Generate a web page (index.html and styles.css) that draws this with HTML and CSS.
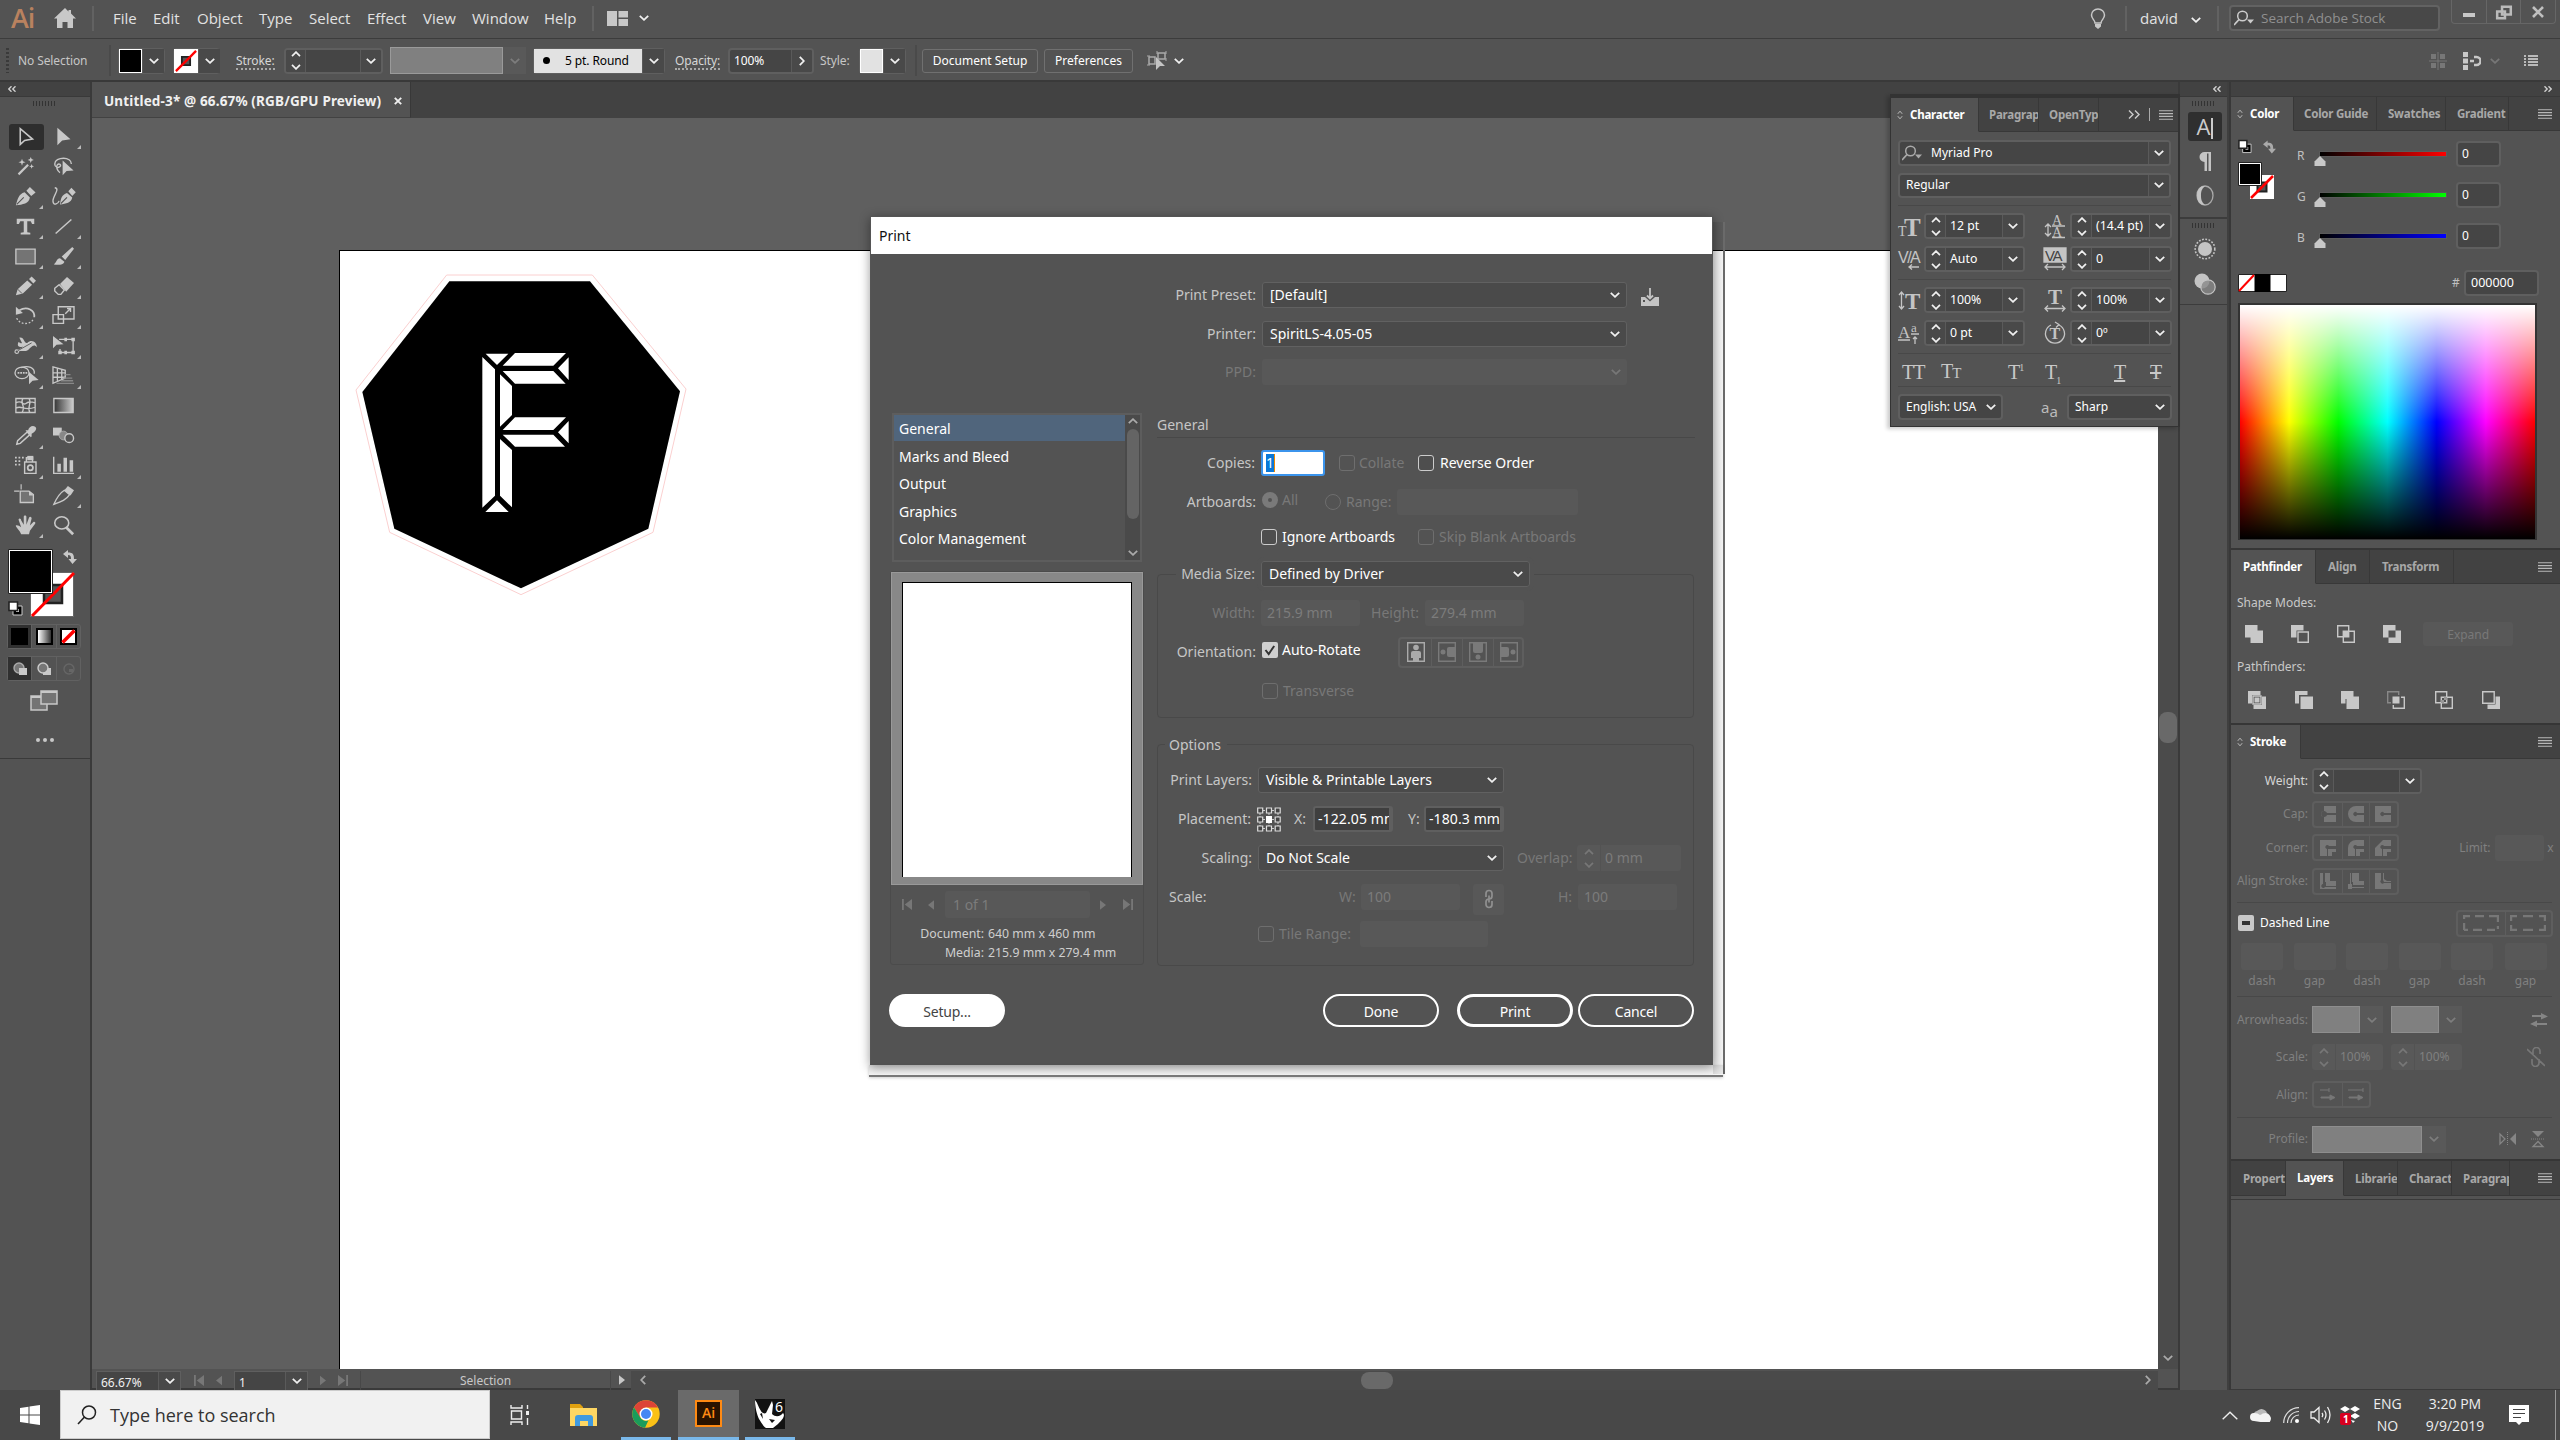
FILE: index.html
```html
<!DOCTYPE html>
<html lang="en">
<head>
<meta charset="utf-8">
<title>Untitled-3 - Print</title>
<link rel="stylesheet" href="styles.css">
</head>
<body>
<svg class="defs" aria-hidden="true">
  <linearGradient id="gr"><stop offset="0" stop-color="#333"/><stop offset="1" stop-color="#ccc"/></linearGradient>
  <symbol id="chev" viewBox="0 0 10 6"><path d="M.8.8 5 4.8 9.2.8" fill="none" stroke="currentColor" stroke-width="1.8"/></symbol>
  <symbol id="steps" viewBox="0 0 10 20"><path d="M.8 5.4 5 1.2l4.2 4.2M.8 14.6 5 18.8l4.2-4.2" fill="none" stroke="currentColor" stroke-width="1.8"/></symbol>
  <symbol id="menu" viewBox="0 0 14 10"><path d="M0 .8h14M0 3.6h14M0 6.4h14M0 9.2h14" stroke="currentColor" stroke-width="1.1"/></symbol>
  <symbol id="dbl" viewBox="0 0 8 6"><path d="M3.5.3.8 3l2.7 2.7M7.5.3 4.8 3l2.7 2.7" fill="none" stroke="currentColor" stroke-width="1.4"/></symbol>
  <symbol id="grip" viewBox="0 0 24 5"><path d="M.5 0v5M3.5 0v5M6.5 0v5M9.5 0v5M12.5 0v5M15.5 0v5M18.5 0v5M21.5 0v5" stroke="#333"/></symbol>
  <symbol id="sort" viewBox="0 0 6 10"><path d="M.8 3.8 3 1.2l2.200 2.600M.8 6.200 3 8.800l2.200-2.600" fill="none" stroke="currentColor"/></symbol>
  <symbol id="none" viewBox="0 0 24 24"><path fill="#fff" d="M0 0h24v24H0z"/><path d="M7.500 7.500h9v9h-9z" fill="#555" stroke="#222" stroke-width="2"/><path d="m1 23 22-22" stroke="#f00" stroke-width="2.500"/></symbol>
  <symbol id="swap" viewBox="0 0 14 14"><path d="M0 4 5 0v2.500c5 0 6 2 6 6.500h3l-4.500 5L5.500 9H8c0-3-.5-4-3-4v3z" fill="currentColor"/></symbol>
  <symbol id="deflt" viewBox="0 0 15 15"><path d="M5 5h9v9H5z" fill="#000" stroke="#ccc"/><path d="M8 8h3v3H8z" fill="#ccc"/><path d="M1 1h8.500v8.500H1z" fill="#fff" stroke="#222" stroke-width="1.600"/></symbol>
  <symbol id="find" viewBox="0 0 20 16"><circle cx="8.500" cy="6" r="4.800" fill="none" stroke="currentColor" stroke-width="1.500"/><path d="M5 9.500 0 15" stroke="currentColor" stroke-width="1.800"/><path d="M13 9.500h7l-3.500 4z" fill="currentColor"/></symbol>
  <symbol id="first" viewBox="0 0 11 12"><path d="M0 0h2v12H0zM11 0v12L3 6z" fill="currentColor"/></symbol>
  <symbol id="prev" viewBox="0 0 7 11"><path d="M7 0v11L0 5.500z" fill="currentColor"/></symbol>
  <symbol id="next" viewBox="0 0 7 11"><path d="M0 0v11l7-5.500z" fill="currentColor"/></symbol>
  <symbol id="last" viewBox="0 0 11 12"><path d="M9 0h2v12H9zM0 0v12l8-6z" fill="currentColor"/></symbol>
  <symbol id="chain" viewBox="0 0 10 20"><path d="M2 8V4.500a3 3 0 0 1 6 0V7a3 3 0 0 1-3 3M8 12v3.500a3 3 0 0 1-6 0V13a3 3 0 0 1 3-3M5 6.500v7" fill="none" stroke="currentColor" stroke-width="1.700"/></symbol>
</svg>

<div class="app">
<header class="menubar">
  <span class="ai">Ai</span>
  <svg width="22" height="20" viewBox="0 0 22 20"><path d="M11 0 0 10.500h3V20h5.500v-6h5v6H19v-9.500h3L17 5.500V2h-2.500v1.400z" fill="#c8c8c8"/></svg>
  <i class="vsep"></i>
  <span>File</span><span>Edit</span><span>Object</span><span>Type</span><span>Select</span><span>Effect</span><span>View</span><span>Window</span><span>Help</span>
  <i class="vsep"></i>
  <svg width="21" height="15" viewBox="0 0 21 15"><path d="M0 0h10v15H0zM11.500 0H21v6.500h-9.500zM11.500 8H21v7h-9.500z" fill="#c8c8c8"/></svg>
  <svg class="chev w"><use href="#chev"/></svg>
  <svg width="16" height="21" viewBox="0 0 16 21"><path d="M5 15c0-3-3.500-4-3.500-8a6.500 6 0 0 1 13 0c0 4-3.500 5-3.500 8z" fill="none" stroke="#c8c8c8" stroke-width="1.500"/><path d="M5 16h6v2.500L8 21l-3-2.500z" fill="#c8c8c8"/></svg>
  <i class="vsep"></i>
  <span>david</span>
  <svg class="chev w low"><use href="#chev"/></svg>
  <i class="vsep"></i>
  <div class="stock"><svg width="20" height="16"><use href="#find"/></svg><span>Search Adobe Stock</span></div>
  <div class="winbtns">
    <svg viewBox="0 0 34 23"><path d="M11 13h12v4H11z" fill="#c8c8c8"/></svg>
    <svg viewBox="0 0 34 23"><path d="M15.500 6.500h9v8h-9zM10.500 11.500h8v7h-8z" fill="#535353" stroke="#bbb" stroke-width="2.600"/></svg>
    <svg viewBox="0 0 34 23"><path d="m12 7 10 10M22 7 12 17" stroke="#c0c0c0" stroke-width="2.600"/></svg>
  </div>
</header>

<div class="ctrl">
  <i class="vgrip"></i>
  <span>No Selection</span>
  <i class="vsep dk"></i>
  <div class="sw"><i class="blk"></i><b><svg class="chev"><use href="#chev"/></svg></b></div>
  <div class="sw"><svg class="nn"><use href="#none"/></svg><b><svg class="chev"><use href="#chev"/></svg></b></div>
  <span class="lnk">Stroke:</span>
  <div class="combo w99"><b><svg class="st"><use href="#steps"/></svg></b><span></span><b><svg class="chev"><use href="#chev"/></svg></b></div>
  <div class="graybox"><i></i><svg class="chev dim"><use href="#chev"/></svg></div>
  <div class="brush"><span><i></i>5 pt. Round</span><b><svg class="chev"><use href="#chev"/></svg></b></div>
  <span class="lnk">Opacity:</span>
  <div class="combo w86"><span>100%</span><b><svg class="chev rt"><use href="#chev"/></svg></b></div>
  <span>Style:</span>
  <div class="sw"><i class="lt"></i><b><svg class="chev"><use href="#chev"/></svg></b></div>
  <i class="vsep dk"></i>
  <button class="cbtn w116">Document Setup</button>
  <button class="cbtn w89">Preferences</button>
  <svg width="20" height="20" viewBox="0 0 20 20"><path d="M2 6h6v7H2zM11 2h7v6h-7z" fill="none" stroke="#aaa" stroke-width="1.500"/><path d="M0 5h3M0 14h3M10 0v3M19 0v3M19 7v3" stroke="#aaa"/><path d="m9 6 9 9h-5l-4 4z" fill="#c4c4c4"/></svg>
  <svg class="chev"><use href="#chev"/></svg>
  <svg width="18" height="18" viewBox="0 0 18 18"><path d="M2 2h5v5H2zM11 2h5v5h-5zM2 11h5v5H2zM11 11h5v5h-5zM0 8.500h18v1H0zM8.500 0h1v18h-1z" fill="#777"/></svg>
  <svg width="18" height="18" viewBox="0 0 18 18"><path d="M0 0h5v5H0zM0 6.500h5v5H0zM0 13h5v5H0z" fill="#c8c8c8"/><path d="M7 9h4m0-4h2.500a4 4 0 0 1 0 8H11" fill="none" stroke="#c8c8c8" stroke-width="2.400"/></svg>
  <svg class="chev dim2"><use href="#chev"/></svg>
  <svg width="14" height="11" viewBox="0 0 14 11"><path d="M0 1h2M4 1h10M0 4h2M4 4h10M0 7h2M4 7h10M0 10h2M4 10h10" stroke="#ddd" stroke-width="1.400"/></svg>
</div>

<main class="main">
<aside class="toolcol">
  <div class="dockhead l"><svg width="8" height="6"><use href="#dbl"/></svg></div>
  <div class="toolpanel">
    <svg class="grip"><use href="#grip"/></svg>
    <div class="tools">
      <div class="on"><svg viewBox="0 0 24 24"><path d="M6 3v18l5-4.500 9-1.500z" fill="none" stroke="#c8c8c8" stroke-width="1.800"/></svg></div>
      <div class="fly"><svg viewBox="0 0 24 24"><path d="M5 2v20l5.500-5.500L20 15z"/></svg></div>
      <div><svg viewBox="0 0 24 24"><path d="m4 21 11-11" stroke="#c8c8c8" stroke-width="2.500"/><path d="m8 3 1 3 3 1-3 1-1 3-1-3-3-1 3-1zM18 1l1 2.500 2.500 1L19 5.500 18 8l-1-2.500-2.500-1 2.500-1zM19 9l.8 2 2 .8-2 .8-.8 2-.8-2-2-.8 2-.8z"/></svg></div>
      <div><svg viewBox="0 0 24 24"><path d="M21 9c0-4-4-6.500-9-6.500S2 5 2 9s4 5 6 3-1-4-3-2 0 7 3 9" fill="none" stroke="#c8c8c8" stroke-width="1.600"/><path d="M11 5v17l4.500-5 8-.5z"/></svg></div>
      <div class="fly"><svg viewBox="0 0 24 24"><path d="M1 22C3 15 4 9 11 7l6 6c-1 7-8 8-16 9zM13 5.500 17 1l6.500 6.500-5 4z"/><path d="m2 21 8-8" stroke="#535353" stroke-width="1.300"/></svg></div>
      <div><svg viewBox="0 0 24 24"><path d="M8 21c1-7 2-11 8-13l6 5c-1 6-7 7-14 8zM17.500 6 21 2l5 5-4 4.500z"/><path d="m9 20 7-7" stroke="#535353" stroke-width="1.300"/><path d="M2 2c7 1-3 10-2 16 1 5 6 2 7-1" fill="none" stroke="#c8c8c8" stroke-width="1.500"/></svg></div>
      <div class="fly"><svg viewBox="0 0 24 24"><path d="M2 3h20v6h-2.500L18 6h-4v12.500l3.500.5v2h-11v-2l3.500-.5V6H6L4.500 9H2z"/></svg></div>
      <div class="fly"><svg viewBox="0 0 24 24"><path d="m3 20 18-16" stroke="#c8c8c8" stroke-width="1.800"/></svg></div>
      <div class="fly"><svg viewBox="0 0 24 24"><path d="M1 3.500h22v17H1z" fill="#747474" stroke="#c8c8c8" stroke-width="1.500"/></svg></div>
      <div class="fly"><svg viewBox="0 0 24 24"><path d="m10 12 12-11 2 2-10 13zM1 21c3-2 3-7 7-7l5 4c-1 4-8 4-12 3z"/></svg></div>
      <div class="fly"><svg viewBox="0 0 24 24"><path d="m1 22 2-7L14 5l5.500 5L9 20zM16 3.500l3-3 5 5-3 3z"/><path d="m3 15 5 5" stroke="#535353"/></svg></div>
      <div class="fly"><svg viewBox="0 0 24 24"><path d="m8 9 8-8 8 7-9 10z"/><path d="m2 14 5-4 6 6-4 5H6l-4-4z" fill="none" stroke="#c8c8c8" stroke-width="1.600"/></svg></div>
      <div class="fly"><svg viewBox="0 0 24 24"><path d="M5 6c9-5 18 0 17 8" fill="none" stroke="#c8c8c8" stroke-width="2"/><path d="M1 2v9l8-2z"/><path d="M2 15c3 8 16 8 19 1" fill="none" stroke="#c8c8c8" stroke-width="1.500" stroke-dasharray="2 2"/></svg></div>
      <div class="fly"><svg viewBox="0 0 24 24"><path d="M6 2h18v14H6zM0 11h12v10H0z" fill="none" stroke="#c8c8c8" stroke-width="1.600"/><path d="m14 10 6-6m-4 0h4v4" fill="none" stroke="#c8c8c8" stroke-width="1.600"/></svg></div>
      <div class="fly"><svg viewBox="0 0 24 24"><path d="M5 3c6-1 5 7 9 6 5-5 11-1 11 5-4-5-7 1-10 3-4 3-10-1-14 4 0-5 5-4 8-8-5 2-7-1-5-5 2 1 3 2 4 1z"/><circle cx="2" cy="19" r="2" fill="#535353" stroke="#c8c8c8" stroke-width="1.300"/><path d="m3 18 16-9" stroke="#535353"/></svg></div>
      <div class="fly"><svg viewBox="0 0 24 24"><path d="M7 5h16v15H8v-4" fill="none" stroke="#c8c8c8" stroke-width="1.500"/><path d="M0 1v14l4-4 8-.5zM21 3h4v4h-4zM21 18h4v4h-4zM13 18h3v4h-3zM6 18h4v4H6zM13 3h3v4h-3z"/></svg></div>
      <div class="fly"><svg viewBox="0 0 24 24"><ellipse cx="8" cy="9" rx="8" ry="6.500" fill="none" stroke="#c8c8c8" stroke-width="1.500"/><path d="M7 3c8-3 16 0 15 7" fill="none" stroke="#c8c8c8" stroke-width="1.500"/><path d="M3 9h12" fill="none" stroke="#c8c8c8" stroke-width="1.800" stroke-dasharray="2 1"/><path d="M16 8v14l4-4 7-1z"/></svg></div>
      <div class="fly"><svg viewBox="0 0 24 24"><path d="M0 2v19l14-6V6zM5 4v14M10 5v11M0 9h14M0 14h14" fill="none" stroke="#c8c8c8" stroke-width="1.500"/><path d="M14 11h6M12 15h10M9 18h14M4 21h20" stroke="#888" stroke-width="1.500"/></svg></div>
      <div><svg viewBox="0 0 24 24"><path d="M1 4h22v16H1zM1 9c7-4 8 3 11 1s5-3 11-1M1 15c7-4 9 4 22-1M9 4c-4 6 4 8-1 16M16 4c4 6-3 9 1 16" fill="none" stroke="#c8c8c8" stroke-width="1.500"/></svg></div>
      <div><svg viewBox="0 0 24 24"><path d="M1 4h22v16H1z" fill="url(#gr)" stroke="#c8c8c8" stroke-width="1.600"/></svg></div>
      <div class="fly"><svg viewBox="0 0 24 24"><path d="m2 22 1-4L14 8l3 3L6 21z" fill="none" stroke="#c8c8c8" stroke-width="1.600"/><path d="m12 6 3 0c1-4 5-6 8-4s0 6-4 8v3l-1 1z"/></svg></div>
      <div><svg viewBox="0 0 24 24"><path d="M0 3h10v9H0z"/><circle cx="12" cy="12" r="5" fill="#888" stroke="#aaa"/><circle cx="18.500" cy="15" r="5" fill="#535353" stroke="#c8c8c8" stroke-width="1.600"/></svg></div>
      <div class="fly"><svg viewBox="0 0 24 24"><path d="M11 8h13v13H11zM13 7V3h7v4" fill="none" stroke="#c8c8c8" stroke-width="1.600"/><circle cx="17.500" cy="14.500" r="3" fill="none" stroke="#c8c8c8" stroke-width="2"/><path d="M14 1h7v5h-7z"/><path d="M0 3h11M0 7h8M0 11h6" stroke="#c8c8c8" stroke-width="1.800" stroke-dasharray="2 2"/></svg></div>
      <div class="fly"><svg viewBox="0 0 24 24"><path d="M.8 2v19H24" fill="none" stroke="#c8c8c8" stroke-width="1.600"/><path d="M5 10h4v9H5zM12 3h4v16h-4zM19 6h4v13h-4z"/></svg></div>
      <div><svg viewBox="0 0 24 24"><path d="M6 7h10l5 4v9H6z" fill="#747474" stroke="#c8c8c8" stroke-width="1.500"/><path d="M-1 7h6M7-1v6" stroke="#c8c8c8" stroke-width="1.300"/><path d="M16 7v5h5z"/></svg></div>
      <div class="fly"><svg viewBox="0 0 24 24"><path d="M1 22C5 13 8 9 13 6l6 5c-4 6-9 8-18 11z" fill="none" stroke="#c8c8c8" stroke-width="1.600"/><path d="m13 6 4-5 7 5-4 6z"/></svg></div>
      <div class="fly"><svg viewBox="0 0 24 24"><path d="M7 22c-1-4-7-9-6-10s4 0 6 2L4 5c1-2 3-1 3 1l3 5V2c0-2 3-2 3 0v9l3-8c1-2 3-1 3 1l-2 8 4-4c1-1 3 0 2 2l-6 8-1 4z"/></svg></div>
      <div><svg viewBox="0 0 24 24"><ellipse cx="10" cy="9" rx="8" ry="7" fill="none" stroke="#c8c8c8" stroke-width="1.800"/><path d="m15 14 8 8" stroke="#c8c8c8" stroke-width="3"/></svg></div>
    </div>
    <svg class="fillstroke" width="75" height="78" viewBox="0 0 75 78"><path d="M22.500 23.500h43v44h-43z" fill="#fff" stroke="#666"/><path d="M36 36h18v18H36z" fill="#555" stroke="#222" stroke-width="2.500"/><path d="m24 67 42-43" stroke="#f00" stroke-width="3"/><path d="M.5.500h44v44H.5z" fill="#fff" stroke="#222"/><path d="M2 2h41v41H2z"/><svg x="55" y="1" width="14" height="14" color="#c8c8c8"><use href="#swap"/></svg><svg x="0" y="52" width="15" height="15"><use href="#deflt"/></svg></svg>
    <div class="seg3"><i class="on"><b class="s1"></b></i><i><b class="s2"></b></i><i><svg width="17" height="17" viewBox="0 0 17 17"><path d="M1 1h15v15H1z" fill="#fff" stroke="#000" stroke-width="2"/><path d="m2.500 14.500 12-12" stroke="#f00" stroke-width="3.500"/></svg></i></div>
    <div class="seg3 d"><i class="on"><svg width="14" height="14" viewBox="0 0 14 14"><circle cx="6" cy="6" r="5" fill="#777" stroke="#aaa" stroke-width="1.400"/><path d="M6 6h8v7H6z" fill="#c8c8c8"/></svg></i><i><svg width="14" height="14" viewBox="0 0 14 14"><path d="M6 6h8v7H6z" fill="#c8c8c8"/><circle cx="6" cy="6" r="5" fill="#777" stroke="#ccc" stroke-width="1.400"/></svg></i><i><svg width="14" height="14" viewBox="0 0 14 14"><circle cx="7" cy="7" r="5" fill="none" stroke="#666" stroke-width="1.400"/><path d="M7 7h4v3H7z" fill="#666"/></svg></i></div>
    <svg class="screen" width="28" height="21" viewBox="0 0 28 21"><path d="M1 6h16v14H1z" fill="#747474" stroke="#c8c8c8" stroke-width="1.500"/><path d="M11 1h16v13H11z" fill="#747474" stroke="#c8c8c8" stroke-width="1.500"/><path d="M11 1h16v2H11zM1 6h10v2H1z" fill="#c8c8c8"/></svg>
    <svg class="dots" width="18" height="4" viewBox="0 0 18 4"><circle cx="2" cy="2" r="2"/><circle cx="9" cy="2" r="2"/><circle cx="16" cy="2" r="2"/></svg>
  </div>
</aside>

<section class="doc">
  <div class="tabs"><div class="doctab"><span>Untitled-3* @ 66.67% (RGB/GPU Preview)</span><svg width="8" height="8" viewBox="0 0 8 8"><path d="m.8.800 6.400 6.400M7.200.800.8 7.200" stroke="#eee" stroke-width="1.900"/></svg></div></div>
  <div class="view">
    <div class="artboard">
      <svg class="logo" width="360" height="360" viewBox="0 0 1080 1080">
        <path d="M320 75H757L1038 417 939 847 543 1034 149 847 48 420z" fill="#fff" stroke="#fbd0d0" stroke-width="3"/>
        <path d="M328 94H750L1020 424 925 836 543 1015 163 836 67 426z"/>
        <path fill="#fff" d="M437 311h68l-34 34zM525 309h153l-38 38H488zM488 363h152l37 38H525zM686 322v68l-32-35zM427 321l38 37v379l-38 36zM480 373l36 35v87l-36 35zM525 502h153l-38 38H488zM488 554h152l35 36H525zM686 513v67l-32-33zM480 567l36 33v172l-36-35zM471 751l35 35h-70z"/>
      </svg>
    </div>
    <div class="vscroll"><i></i><svg class="chev"><use href="#chev"/></svg></div>
  </div>
  <div class="status">
    <div class="sbox z"><span>66.67%</span><b><svg class="chev"><use href="#chev"/></svg></b></div>
    <svg class="sn" width="10" height="11"><use href="#first"/></svg>
    <svg class="sn" width="6" height="11"><use href="#prev"/></svg>
    <div class="sbox n"><span>1</span><b><svg class="chev"><use href="#chev"/></svg></b></div>
    <svg class="sn" width="6" height="11"><use href="#next"/></svg>
    <svg class="sn" width="10" height="11"><use href="#last"/></svg>
    <i class="ssep"></i>
    <span class="sel">Selection</span>
    <i class="ssep"></i>
    <svg class="sp" width="6" height="10"><use href="#next"/></svg>
    <div class="hscroll"><svg class="chev lf"><use href="#chev"/></svg><i></i><svg class="chev rt"><use href="#chev"/></svg></div>
  </div>
</section>

<aside class="dock">
  <div class="dockhead r"><svg width="8" height="6"><use href="#dbl"/></svg></div>
  <div class="dk1"><svg class="grip"><use href="#grip"/></svg>
    <div class="dbtn on">A<i></i></div>
    <div class="dbtn"><svg width="16" height="20" viewBox="0 0 16 20"><path d="M14 0v19h-2.500V1.500H10V19H7.500v-9A5 5 0 0 1 7.500 0z" fill="#c4c4c4"/></svg></div>
    <div class="dbtn"><svg width="18" height="21" viewBox="0 0 18 21"><ellipse cx="9" cy="10.500" rx="8" ry="9.500" fill="none" stroke="#aaa" stroke-width="1.300"/><path d="M9 1C3 1 1 6 1 10.500S3 20 9 20C5.500 17 5 14 5 10.500S5.500 4 9 1z" fill="#c4c4c4"/></svg></div>
  </div>
  <div class="dk2"><svg class="grip"><use href="#grip"/></svg>
    <div class="dbtn"><svg width="22" height="22" viewBox="0 0 22 22"><circle cx="11" cy="11" r="7" fill="#c4c4c4"/><circle cx="11" cy="11" r="9.800" fill="none" stroke="#c4c4c4" stroke-width="1.600" stroke-dasharray="1.800 1.500"/></svg></div>
    <div class="dbtn"><svg width="22" height="22" viewBox="0 0 22 22"><circle cx="8" cy="8" r="7.500" fill="#c4c4c4"/><circle cx="14" cy="14" r="7.200" fill="#888" fill-opacity=".8" stroke="#c4c4c4" stroke-width="1.200"/></svg></div>
  </div>
</aside>

<aside class="panels">
  <div class="dockhead rr"><svg width="8" height="6" class="flip"><use href="#dbl"/></svg></div>
  <section class="pcolor">
    <div class="ptabs t1"><span class="on"><svg class="sort"><use href="#sort"/></svg>Color</span><span>Color Guide</span><span>Swatches</span><span>Gradient</span><em><svg class="menu"><use href="#menu"/></svg></em></div>
    <div class="colorbody">
      <svg class="cfs" width="40" height="62" viewBox="0 0 40 62"><svg width="14" height="15"><use href="#deflt"/></svg><svg x="25" y="1" width="13" height="14" color="#aaa"><use href="#swap"/></svg><svg x="12" y="36" width="24" height="24"><use href="#none"/></svg><path d="M.5 23.500h23v23H.5z" stroke="#222" fill="#fff"/><path d="M2 25h20v20H2z"/></svg>
      <div class="rgb">
        <span>R</span><i class="sl r"><svg width="12" height="10" viewBox="0 0 12 10"><path d="m6 0 5.500 5.500V10H.5V5.500z" fill="#c8c8c8"/></svg></i><u>0</u>
        <span>G</span><i class="sl g"><svg width="12" height="10" viewBox="0 0 12 10"><path d="m6 0 5.500 5.500V10H.5V5.500z" fill="#c8c8c8"/></svg></i><u>0</u>
        <span>B</span><i class="sl b"><svg width="12" height="10" viewBox="0 0 12 10"><path d="m6 0 5.500 5.500V10H.5V5.500z" fill="#c8c8c8"/></svg></i><u>0</u>
      </div>
    </div>
    <div class="hexrow"><svg width="49" height="18" viewBox="0 0 49 18"><path d="M.5.500h48v17H.5z" fill="#fff" stroke="#222"/><path d="M16.500 0h16v18h-16z"/><path d="m1 17 15-16" stroke="#f00" stroke-width="2"/></svg><span>#</span><u>000000</u></div>
    <div class="spectrum"></div>
  </section>
  <section class="ppath">
    <div class="ptabs t2"><span class="on">Pathfinder</span><span>Align</span><span>Transform</span><em><svg class="menu"><use href="#menu"/></svg></em></div>
    <p>Shape Modes:</p>
    <div class="pf a">
      <svg viewBox="0 0 18 18"><path d="M0 0h12.500v5.500H18V18H5.500v-5.500H0z"/></svg>
      <svg viewBox="0 0 18 18"><path d="M0 0h12.500v5.500h-7v7H0z"/><path class="o" d="M7 7h10.300v10.300H7z"/></svg>
      <svg viewBox="0 0 18 18"><path class="o" d="M.7.700h11v11h-11zM6.300 6.300h11v11h-11z"/><path d="M6 6h6v6H6z"/></svg>
      <svg viewBox="0 0 18 18"><path fill-rule="evenodd" d="M0 0h12.500v5.500H18V18H5.500v-5.500H0zM5.500 5.500v7h7v-7z"/></svg>
      <span class="expand">Expand</span>
    </div>
    <p class="p2">Pathfinders:</p>
    <div class="pf c">
      <svg viewBox="0 0 18 18"><path d="M0 0h12.500v4H4v8.500H0zM14 5.500h4V18H5.500v-4H14z"/><path class="o" d="M5 5h8v8H5z"/><path d="M6.500 6.500h5v5h-5z"/></svg>
      <svg viewBox="0 0 18 18"><path d="M0 0h12.500v4H4v8.500H0zM5.500 5.500H18V18H5.500z"/></svg>
      <svg viewBox="0 0 18 18"><path d="M0 0h12.500v5.500H18V18H5.500V8H4.500v4.500H0z"/></svg>
      <svg viewBox="0 0 18 18"><path d="M11.700 4V.7h-11v11H4" fill="none" stroke="#888" stroke-width="1.400"/><path d="M5.500 5.500h7v7h-7z"/><path class="o" d="M14 6.300h3.300v11h-11V14"/></svg>
      <svg viewBox="0 0 18 18"><path class="o" d="M.7.700h11v11h-11zM6.300 6.300h11v11h-11z"/><path d="M6 9h3v3H6zM9 6h3v3H9z" fill="#999"/></svg>
      <svg viewBox="0 0 18 18"><path d="M13.500 5.500H18V18H5.500v-4.500h8z"/><path class="o" d="M.7.700h11.500v11.500H.7z"/></svg>
    </div>
  </section>
  <section class="pstroke">
    <div class="ptabs t3"><span class="on"><svg class="sort"><use href="#sort"/></svg>Stroke</span><em><svg class="menu"><use href="#menu"/></svg></em></div>
    <div class="sr"><label class="lit">Weight:</label><div class="combo w110"><b><svg class="st"><use href="#steps"/></svg></b><span></span><b><svg class="chev"><use href="#chev"/></svg></b></div></div>
    <div class="sr"><label>Cap:</label><div class="seg">
      <i><svg viewBox="0 0 16 16"><path d="M4 0h12v7H7a3 3 0 1 0 0 2h9v7H4v-5a3 3 0 0 1 0-6z"/></svg></i><i><svg viewBox="0 0 16 16"><path d="M8 0h8v7H9a2 2 0 1 0 0 2h7v7H8A8 8 0 0 1 8 0z"/></svg></i><i><svg viewBox="0 0 16 16"><path d="M0 0h16v7H9a2 2 0 1 0 0 2h7v7H0z"/></svg></i></div></div>
    <div class="sr"><label>Corner:</label><div class="seg">
      <i><svg viewBox="0 0 16 16"><path d="M0 0h16v6H9a2 2 0 1 0-2 3v7H0zM8 9h8v3h-4v4H8z"/></svg></i><i><svg viewBox="0 0 16 16"><path d="M8 0h8v6H9a2 2 0 1 0-2 3v7H0V8a8 8 0 0 1 8-8zM8 9h8v3h-4v4H8z"/></svg></i><i><svg viewBox="0 0 16 16"><path d="M8 0h8v6H9a2 2 0 1 0-2 3v7H0V8zM8 9h8v3h-4v4H8z"/></svg></i></div><label class="lim">Limit:</label><u class="dis"></u><label class="x">x</label></div>
    <div class="sr"><label>Align Stroke:</label><div class="seg">
      <i><svg viewBox="0 0 16 16"><path d="M0 0h3v11a2 2 0 1 0 2 3h11v2H0zM5 0h5v8h6v5H6V9H5z"/></svg></i><i><svg viewBox="0 0 16 16"><path d="M4 0h7v8h5v4H5V9H4zM2 0h1v11H2zM0 11h4v5H0zM4 14h12v1H4z"/></svg></i><i><svg viewBox="0 0 16 16"><path d="M0 0h6v7a2 2 0 1 0 3 3h7v6H0zM8 0h1v6l3 2h4v1H9L8 7z"/></svg></i></div></div>
    <hr>
    <div class="dashrow"><svg width="16" height="16" viewBox="0 0 16 16"><rect width="16" height="16" rx="2" fill="#c8c8c8"/><path d="M4 6h8v4H4z" fill="#333"/></svg><span>Dashed Line</span><div class="seg wide"><i><svg viewBox="0 0 36 16"><path d="M1 15V8M1 4V1h6M12 1h9M26 1h9v6M1 15h4M10 15h9M24 15h8M35 14v-3" fill="none" stroke="#777" stroke-width="2.400"/></svg></i><i><svg viewBox="0 0 36 16"><path d="M1 6V1h6M13 1h10M29 1h6v5M35 10v5h-6M23 15H13M7 15H1v-5" fill="none" stroke="#777" stroke-width="2.400"/></svg></i></div></div>
    <div class="dashes"><div><u class="dis"></u>dash</div><div><u class="dis"></u>gap</div><div><u class="dis"></u>dash</div><div><u class="dis"></u>gap</div><div><u class="dis"></u>dash</div><div><u class="dis"></u>gap</div></div>
    <hr>
    <div class="sr ah"><label>Arrowheads:</label><div class="ar"><i></i><svg class="chev dim"><use href="#chev"/></svg></div><div class="ar"><i></i><svg class="chev dim"><use href="#chev"/></svg></div><svg class="end" width="18" height="14" viewBox="0 0 18 14"><path d="M2 3h10M6 11h11" stroke="#858585" stroke-width="2"/><path d="M11 0l7 3.500-7 3zM7 7.500 0 11l7 3z" fill="#858585"/></svg></div>
    <div class="sr sc"><label>Scale:</label><div class="stp"><svg class="st dim"><use href="#steps"/></svg><span>100%</span></div><div class="stp"><svg class="st dim"><use href="#steps"/></svg><span>100%</span></div><svg class="end" width="18" height="20" viewBox="0 0 18 20"><path d="m0 2 18 17M6 8V4a3.500 3.500 0 0 1 7 0v3M12 12v4a3.500 3.500 0 0 1-7 0v-4" fill="none" stroke="#777" stroke-width="1.700"/></svg></div>
    <div class="sr al"><label>Align:</label><div class="seg"><i><svg viewBox="0 0 16 16"><path d="M0 3h9M9 1v4M1 10h9V8l5 2.500-5 2.500v-2H1z" stroke="#777"/></svg></i><i><svg viewBox="0 0 16 16"><path d="M0 3h15M15 1v4M1 10h9V8l5 2.500-5 2.500v-2H1z" stroke="#777"/></svg></i></div></div>
    <hr>
    <div class="sr pr"><label>Profile:</label><div class="ar w134"><i></i><svg class="chev dim"><use href="#chev"/></svg></div><svg class="end" width="18" height="14" viewBox="0 0 18 14"><path d="M1 2v10l5-5z" fill="none" stroke="#858585" stroke-width="1.300"/><path d="M17 1v12l-6-6z" fill="#858585"/><path d="M8.500 0v14" stroke="#858585" stroke-dasharray="1 1"/></svg><svg width="14" height="18" viewBox="0 0 14 18"><path d="M1 1h12L7 7z" fill="#858585"/><path d="M2 16.500h10L7 11.500z" fill="none" stroke="#858585" stroke-width="1.300"/><path d="M0 9h14" stroke="#858585" stroke-dasharray="1 1"/></svg></div>
  </section>
  <section class="players">
    <div class="ptabs t4"><span>Propert</span><span class="on">Layers</span><span>Librarie</span><span>Charact</span><span>Paragrap</span><em><svg class="menu"><use href="#menu"/></svg></em></div>
  </section>
</aside>
</main>

<footer class="taskbar">
  <svg width="20" height="20" viewBox="0 0 20 20"><path d="M0 3l8.500-1.200v7.700H0zM9.500 1.600 20 0v9.500H9.500zM0 10.500h8.500v7.700L0 17zM9.500 10.500H20V20L9.500 18.400z" fill="#fff"/></svg>
  <div class="search"><svg width="20" height="20" viewBox="0 0 20 20"><circle cx="12" cy="7.500" r="6.500" fill="none" stroke="#222" stroke-width="1.500"/><path d="M7.500 12 1 19" stroke="#222" stroke-width="1.600"/></svg><span>Type here to search</span></div>
  <svg width="20" height="20" viewBox="0 0 20 20"><path d="M1 0v3h11V0M1.500 6h10v8h-10zM1 20v-3h11v3M17.500 0v4M17.500 13v7" fill="none" stroke="#eee" stroke-width="1.400"/><path d="M16 6h3v4h-3z" fill="#eee"/></svg>
  <svg width="28" height="24" viewBox="0 0 28 24"><path d="M0 1h10l3 3v4H0z" fill="#e0a00e"/><path d="M0 5h27v18H0z" fill="#fdd663"/><path d="M5 23v-8q0-3 3-3h12q3 0 3 3v8h-5v-5h-8v5z" fill="#3f9ae0"/></svg>
  <svg width="28" height="28" viewBox="0 0 28 28"><circle cx="14" cy="14" r="13.700" fill="#fbc116"/><path d="M2 7.300A13.700 13.700 0 0 1 26 7.500H14L8 17.500z" fill="#dc4437"/><path d="M2 7.300 8.200 17.500a6.500 6.500 0 0 0 8.300 2.700L13 27.700A13.700 13.700 0 0 1 2 7.300z" fill="#1a9c5b"/><circle cx="14" cy="14" r="6.500" fill="#fff"/><circle cx="14" cy="14" r="5" fill="#4587f3"/></svg>
  <div class="aitask"><span>Ai</span></div>
  <svg width="30" height="30" viewBox="0 0 30 30"><path fill="#111" d="M0 0h30v30H0z"/><path d="M0 1c3 3 3 7 6 11 1 2 3 3 5 2l2-4 4-8 1 4-1 9c4 4 9 2 11-1 3 3-2 8-5 11l-5 4h-7c-3-2-5-6-7-9C2 16 0 8 0 1z" fill="#fff"/><path d="m14 20 6 1-3 3zM5 15l3 5-1-6z" fill="#111"/><text x="20" y="13" font-family="Noto Sans" font-size="14" fill="#fff">6</text></svg>
  <div class="tray">
    <svg width="16" height="9" viewBox="0 0 16 9"><path d="m.7 8.300 7.300-7 7.300 7" fill="none" stroke="#eee" stroke-width="1.400"/></svg>
    <svg width="21" height="14" viewBox="0 0 21 14"><path d="M4 9a4 4 0 0 1 3-6 6 6 0 0 1 10 2z" fill="#bbb"/><path d="M4 13a4 4 0 0 1 0-8q4 0 6 2 8-5 11 3 0 5-4 5z" fill="#f4f4f4"/></svg>
    <svg width="16" height="16" viewBox="0 0 16 16"><g fill="none" stroke="#ddd" stroke-width="1.200"><path d="M.7 16A15.300 15.300 0 0 1 16 .7M4.500 16A11.500 11.500 0 0 1 16 4.500M8 16a8 8 0 0 1 8-8"/></g><circle cx="14" cy="14" r="2" fill="#fff"/></svg>
    <svg width="21" height="20" viewBox="0 0 21 20"><g fill="none" stroke="#eee" stroke-width="1.300"><path d="M1 7h3l5-4.500v15L4 13H1zM12 8q1.500 2 0 4M14.500 5.500q3 4.500 0 9M17.500 2q5 8 0 16"/></g></svg>
    <svg width="20" height="20" viewBox="0 0 20 20"><path d="m5 1 5 3-5 3-5-3zM15 1l5 3-5 3-5-3zM15 8l5 3-5 3-5-3zM11 15l4 1-2 2z" fill="#fff"/><rect x="0" y="8" width="11" height="12" rx="2" fill="#d8001f"/><text x="3" y="18" font-size="10" font-weight="700" font-family="Noto Sans" fill="#fff">1</text></svg>
    <div class="two"><span>ENG</span><span>NO</span></div>
    <div class="two"><span>3:20 PM</span><span>9/9/2019</span></div>
    <svg width="20" height="20" viewBox="0 0 20 20"><path d="M0 0h20v17h-7l-3 3-3-3H0z" fill="#fff"/><path d="M4 4.500h12M4 8.500h12M4 12.500h8" stroke="#444" stroke-width="1.200"/></svg>
    <i class="peek"></i>
  </div>
</footer>
</div>

<section class="char">
  <div class="ctabs"><span class="on"><svg class="sort"><use href="#sort"/></svg>Character</span><span>Paragrap</span><span>OpenTyp</span><em><svg width="12" height="9" viewBox="0 0 12 9"><path d="m1 .5 4 4-4 4M7 .5l4 4-4 4" fill="none" stroke="#ccc" stroke-width="1.400"/></svg><i></i><svg class="menu"><use href="#menu"/></svg></em></div>
  <div class="cbody">
    <div class="combo full"><svg class="fi" width="20" height="16"><use href="#find"/></svg><span>Myriad Pro</span><b><svg class="chev"><use href="#chev"/></svg></b></div>
    <div class="combo full f2"><span>Regular</span><b><svg class="chev"><use href="#chev"/></svg></b></div>
    <hr>
    <div class="cg">
      <svg viewBox="0 0 22 24"><text x="0" y="22" font-size="14">T</text><text x="6" y="22" font-size="25" font-weight="700">T</text></svg><div class="combo"><b><svg class="st"><use href="#steps"/></svg></b><span>12 pt</span><b><svg class="chev"><use href="#chev"/></svg></b></div>
      <svg viewBox="0 0 22 24"><text x="8" y="11" font-size="14">A</text><text x="8" y="23" font-size="14">A</text><path d="M4 10v12M1 13l3-3 3 3M1 19l3 3 3-3M8 12h13M8 23.500h13"/></svg><div class="combo"><b><svg class="st"><use href="#steps"/></svg></b><span>(14.4 pt)</span><b><svg class="chev"><use href="#chev"/></svg></b></div>
      <svg viewBox="0 0 22 24"><text class="s" x="0" y="16" font-size="16">V/A</text><path d="M21 20H11M14 17.500 11 20l3 2.500"/></svg><div class="combo"><b><svg class="st"><use href="#steps"/></svg></b><span>Auto</span><b><svg class="chev"><use href="#chev"/></svg></b></div>
      <svg viewBox="0 0 22 24"><path d="M0 1h22v14H0z" fill="#c4c4c4" stroke="none"/><text class="k" x="1" y="14" font-size="15">VA</text><path d="M1 20h20M4 17l-3 3 3 3M18 17l3 3-3 3"/></svg><div class="combo"><b><svg class="st"><use href="#steps"/></svg></b><span>0</span><b><svg class="chev"><use href="#chev"/></svg></b></div>
    </div>
    <hr>
    <div class="cg">
      <svg viewBox="0 0 22 24"><text x="7" y="21" font-size="23" font-weight="700">T</text><path d="M3.500 4v17M1 7l2.500-3L6 7M1 18l2.500 3L6 18"/></svg><div class="combo"><b><svg class="st"><use href="#steps"/></svg></b><span>100%</span><b><svg class="chev"><use href="#chev"/></svg></b></div>
      <svg viewBox="0 0 22 24"><text x="4" y="16" font-size="21" font-weight="700">T</text><path d="M1 20.500h20M4 17.500l-3 3 3 3M18 17.500l3 3-3 3"/></svg><div class="combo"><b><svg class="st"><use href="#steps"/></svg></b><span>100%</span><b><svg class="chev"><use href="#chev"/></svg></b></div>
      <svg viewBox="0 0 22 24"><text x="0" y="17" font-size="17">A</text><text x="13" y="11" font-size="13">a</text><path d="M0 19h12M13 13h8M17 23v-7M15 18l2-2 2 2"/></svg><div class="combo"><b><svg class="st"><use href="#steps"/></svg></b><span>0 pt</span><b><svg class="chev"><use href="#chev"/></svg></b></div>
      <svg viewBox="0 0 22 24"><text x="5.500" y="18" font-size="16" font-weight="700">T</text><path d="M7 4a9.500 9.500 0 1 0 8 0M11 1l4 2.500-3 3"/></svg><div class="combo"><b><svg class="st"><use href="#steps"/></svg></b><span>0º</span><b><svg class="chev"><use href="#chev"/></svg></b></div>
    </div>
    <hr>
    <div class="tt"><span>TT</span><span>T<small>T</small></span><span>T<sup>1</sup></span><span>T<sub>1</sub></span><span class="un">T</span><span class="sk">T</span></div>
    <hr>
    <div class="lang"><div class="combo one"><span>English: USA</span><svg class="chev"><use href="#chev"/></svg></div><span class="aa">a<i>a</i></span><div class="combo one"><span>Sharp</span><svg class="chev"><use href="#chev"/></svg></div></div>
  </div>
</section>

<section class="dialog">
  <header>Print</header>
  <div class="dtop">
    <label>Print Preset:</label><div class="dsel"><span>[Default]</span><svg class="chev"><use href="#chev"/></svg></div><svg class="save" width="18" height="18" viewBox="0 0 18 18"><path d="M0 9h4l5 4.500L14 9h4v9H0z" fill="#c4c4c4"/><path d="M9 0v10M6 7.500l3 3 3-3" fill="none" stroke="#c4c4c4" stroke-width="1.800"/><path d="M2 12h2v2H2z" fill="#535353"/></svg>
    <label>Printer:</label><div class="dsel"><span>SpiritLS-4.05-05</span><svg class="chev"><use href="#chev"/></svg></div><i></i>
    <label class="off">PPD:</label><div class="dsel dis"><svg class="chev"><use href="#chev"/></svg></div><i></i>
  </div>
  <div class="dmid">
    <div class="dleft">
      <div class="list"><ul><li class="on">General</li><li>Marks and Bleed</li><li>Output</li><li>Graphics</li><li>Color Management</li><li>Advanced</li></ul><div class="lsb"><svg class="chev up"><use href="#chev"/></svg><i></i><svg class="chev"><use href="#chev"/></svg></div></div>
      <div class="prevbox">
        <div class="mat"><div class="page"></div></div>
        <div class="nav"><svg width="10" height="11"><use href="#first"/></svg><svg width="6" height="10"><use href="#prev"/></svg><u class="dis">1 of 1</u><svg width="6" height="10"><use href="#next"/></svg><svg width="10" height="11"><use href="#last"/></svg></div>
        <div class="info"><span>Document:</span><span>640 mm x 460 mm</span><span>Media:</span><span>215.9 mm x 279.4 mm</span></div>
      </div>
    </div>
    <div class="dright">
      <h2>General</h2>
      <div class="dr r1"><label>Copies:</label><div class="copies"><mark>1</mark></div><i class="ck off"></i><span class="off">Collate</span><i class="ck"></i><span>Reverse Order</span></div>
      <div class="dr r2"><label>Artboards:</label><i class="rad on"></i><span class="off up1">All</span><i class="rad"></i><span class="off">Range:</span><u class="dis"></u></div>
      <div class="dr r3"><i class="ck"></i><span>Ignore Artboards</span><i class="ck off"></i><span class="off">Skip Blank Artboards</span></div>
      <div class="grp g1">
        <div class="dr m1"><label class="bg">Media Size:</label><div class="dsel"><span>Defined by Driver</span><svg class="chev"><use href="#chev"/></svg></div></div>
        <div class="dr m2"><label class="off">Width:</label><u class="dis">215.9 mm</u><label class="off">Height:</label><u class="dis">279.4 mm</u></div>
        <div class="dr m3"><label>Orientation:</label><svg class="ckon" width="16" height="16" viewBox="0 0 16 16"><rect width="16" height="16" rx="2" fill="#cfcfcf"/><path d="m3.500 8 3.200 4 5.500-8" fill="none" stroke="#333" stroke-width="2"/></svg><span class="up1">Auto-Rotate</span>
          <div class="ori"><i class="on"><svg viewBox="0 0 18 20"><path d="M.7.700h16.600v18.600H.7z"/><circle cx="9" cy="5.500" r="2.800"/><path class="f" d="M4 16v-5q0-2 2-2h6q2 0 2 2v5h-2v3H6v-3z"/></svg></i><i><svg viewBox="0 0 18 20"><path d="M.7.700h16.600v18.600H.7z"/><circle cx="5" cy="10" r="2.500"/><path class="f" d="M17 5h-6q-2 0-2 2v6q0 2 2 2h6z"/></svg></i><i><svg viewBox="0 0 18 20"><path d="M.7.700h16.600v18.600H.7z"/><circle cx="9" cy="15" r="2.500"/><path class="f" d="M4 1v8q0 2 2 2h6q2 0 2-2V1z"/></svg></i><i><svg viewBox="0 0 18 20"><path d="M.7.700h16.600v18.600H.7z"/><circle cx="13" cy="10" r="2.500"/><path class="f" d="M1 5h6q2 0 2 2v6q0 2-2 2H1z"/></svg></i></div></div>
        <div class="dr r3 m4"><i class="ck off"></i><span class="off">Transverse</span></div>
      </div>
      <div class="grp g2">
        <h3><span>Options</span></h3>
        <div class="dr o1"><label>Print Layers:</label><div class="dsel"><span>Visible &amp; Printable Layers</span><svg class="chev"><use href="#chev"/></svg></div></div>
        <div class="dr o2"><label>Placement:</label><svg width="24" height="25" viewBox="0 0 24 25"><path d="M3 3.500h18M3 12.500h18M3 21.500h18M3 3v19M12 3v19M21 3v19" stroke="#ccc" stroke-dasharray="2 1"/><g fill="#444" stroke="#ddd" stroke-width="1.200"><path d="M.7 1h5v5h-5zM9.500 1h5v5h-5zM18.200 1h5v5h-5zM.7 10h5v5h-5zM18.200 10h5v5h-5zM.7 19h5v5h-5zM9.500 19h5v5h-5zM18.200 19h5v5h-5z"/></g><path d="M9 9h6v7H9z" fill="#fff"/></svg><span class="mut">X:</span><u>-122.05 mm</u><span class="mut">Y:</span><u>-180.3 mm</u></div>
        <div class="dr o3"><label>Scaling:</label><div class="dsel"><span>Do Not Scale</span><svg class="chev"><use href="#chev"/></svg></div><span class="off">Overlap:</span><div class="ovl"><svg class="st dim"><use href="#steps"/></svg><span>0 mm</span></div></div>
        <div class="dr o4"><span class="mut">Scale:</span><span class="off">W:</span><u class="dis">100</u><i class="lk"><svg width="10" height="20"><use href="#chain"/></svg></i><span class="off">H:</span><u class="dis">100</u></div>
        <div class="dr o5"><i class="ck off"></i><span class="off">Tile Range:</span><u class="dis"></u></div>
      </div>
    </div>
  </div>
  <div class="dfoot"><button class="fill">Setup...</button><button>Done</button><button class="def">Print</button><button>Cancel</button></div>
</section>
</body>
</html>
```
FILE: styles.css
```css
*{box-sizing:border-box;margin:0;padding:0}
body{width:2560px;height:1440px;overflow:hidden;background:#535353;color:#f0f0f0;font:12px/16px "Noto Sans",sans-serif;position:relative}
i,em{font-style:normal;display:block}
u{text-decoration:none;display:block}
span,label{white-space:nowrap;display:block}
svg{display:block;flex:none}
button{font:inherit;white-space:nowrap;color:#fff;background:none}
.defs{position:absolute;width:0;height:0}
.chev{width:10px;height:6px;color:#f0f0f0}
.chev.dim{color:#7d7d7d}
.chev.dim2{color:#777}
.chev.rt{transform:rotate(-90deg)}
.chev.lf{transform:rotate(90deg)}
.chev.up{transform:rotate(180deg)}
.chev.low{position:relative;top:2px}
.st{width:10px;height:19px;color:#f0f0f0}
.st.dim{color:#777}
.menu{width:14px;height:10px;color:#b8b8b8}
.grip{width:24px;height:5px;margin:0 auto}
.sort{width:6px;height:10px;color:#bbb}
.app{display:grid;grid-template-rows:39px 43px 1308px 50px;height:1440px}

.menubar{display:grid;grid-template-columns:43px 38px 21px 40px 44px 62px 50px 58px 56px 49px 72px 48px 15px 32px 1451px 35px 15px 51px 26px 12px 223px 104px;padding-left:11px;align-items:center;border-bottom:1px solid #3c3c3c;font:15px/20px "Open Sans",sans-serif;color:#e2e2e2;padding-bottom:2px}
.ai{font:600 27px/30px "Open Sans",sans-serif;color:#b9825f;letter-spacing:-1px}
.vsep{width:2px;height:25px;background:#626262}
.vsep.dk{background:#4a4a4a;height:31px}
.stock{display:flex;align-items:center;gap:7px;width:211px;height:26px;border:2px solid #626262;border-radius:4px;background:#484848;padding-left:3px;color:#909090;font-size:13.500px}
.stock svg{color:#ccc}
.winbtns{display:grid;grid-template-columns:35px 34px 34px;height:24px;border:1px solid #666;border-top:0;border-radius:0 0 4px 4px;align-self:start;margin-left:-1px}
.winbtns svg{border-right:1px solid #666;width:100%;height:23px}
.winbtns svg:last-child{border:0}

.ctrl{display:grid;grid-template-columns:12px 91px 9px 55px 63px 48px 106px 143px 142px 53px 92px 39px 56px 7px 122px 103px 27px 1255px 34px 27px 34px 30px;padding-left:6px;align-items:center;border-bottom:2px solid #393939;color:#c6c6c6;padding-top:2px;letter-spacing:-.1px}
.vgrip{width:3px;height:25px;background:repeating-linear-gradient(#3a3a3a 0 2px,transparent 2px 4px)}
.sw{display:flex;height:26px;width:47px;border:1px solid #5f5f5f;border-radius:3px;background:#454545}
.sw>i,.sw>.nn{width:24px;height:24px;border:1px solid #fff;background:#000}
.sw>i.lt{background:#e2e2e2}
.sw b,.combo b,.brush b,.sbox b{display:grid;place-items:center;width:22px;border-left:1px solid #5a5a5a;flex:none;background:#494949}
.combo b:first-child{border:0}
.lnk{border-bottom:2px dotted #aaa;width:max-content;line-height:15px;color:#d6d6d6;position:relative;top:1px}
.combo{display:flex;align-items:stretch;height:26px;border:2px solid #5f5f5f;border-radius:4px;background:#454545;color:#fff;overflow:hidden}
.combo span{flex:1;align-self:center;padding-left:4px;overflow:hidden}
.combo b{width:21px}
.combo b:first-child{width:19px}
.combo b:first-child+span{border-left:1px solid #5a5a5a;height:22px;line-height:22px}
.w99{width:99px}.w86{width:86px}.w110{width:110px}
.graybox{display:flex;align-items:center;width:136px;height:27px;background:#595959;gap:7px}
.graybox i{width:113px;height:27px;background:#808080;border:1px solid #9a9a9a}
.brush{display:flex;width:132px;height:26px;background:#454545;border:1px solid #5f5f5f;border-radius:3px;color:#000}
.brush span{display:flex;align-items:center;width:108px;background:#e2e2e2;padding-left:9px}
.brush i{width:7px;height:7px;border-radius:50%;background:#000;margin-right:15px}
.cbtn{height:24px;border:1px solid #707070;border-radius:3px;line-height:22px}
.w116{width:116px}.w89{width:89px}

.main{display:grid;grid-template-columns:92px 2088px 49px 331px}
.toolcol{border-right:2px solid #3a3a3a}
.dockhead{height:15px;background:#424242;border-bottom:1px solid #393939;display:flex;align-items:center;color:#d0d0d0;padding-left:8px}
.dockhead.r{padding-left:33px}
.dockhead.rr{padding-left:313px}
.flip{transform:scaleX(-1)}
.toolpanel{height:662px;border-bottom:1px solid #3a3a3a;padding-top:4px}
.tools{display:grid;grid-template-columns:37.500px 38px;grid-auto-rows:29.930px;margin:15.500px 0 0 7px}
.tools div{display:grid;place-items:center;position:relative}
.tools svg{width:21px;height:21px;fill:#c8c8c8;overflow:visible}
.tools .on::before{content:"";position:absolute;inset:2px 1px 1px 2px;background:#2e2e2e;border-radius:3px}
.tools .on svg{position:relative}
.tools .fly::after{content:"";position:absolute;right:2px;bottom:2px;border:2.500px solid transparent;border-right-color:#bbb;border-bottom-color:#bbb}
.fillstroke{margin:9px 0 0 8px}
.seg3{display:grid;grid-template-columns:23px 25px 24px;width:74px;height:25px;margin:-3px 0 0 7px;border:1px solid #616161;border-radius:3px}
.seg3 i{display:grid;place-items:center}
.seg3 i+i{border-left:1px solid #616161}
.seg3 .on{background:#303030}
.seg3.d{margin-top:7px}
.seg3 b{width:17px;height:17px;background:#000;border:2px solid #000}
.seg3 .s2{background:linear-gradient(90deg,#fff,#333)}
.screen{margin:9px 0 0 30px}
.dots{margin:27px 0 0 36px;fill:#c8c8c8}

.doc{display:grid;grid-template-rows:36px 1251px 21px;border-right:2px solid #3a3a3a}
.tabs{background:#424242}
.doctab{display:flex;align-items:center;justify-content:space-between;width:319px;height:36px;background:#535353;padding:2px 8px 0 12px;border-right:1px solid #383838;border-bottom:1px solid #424242;font-weight:700;font-size:13.500px;letter-spacing:.15px;color:#f0f0f0}
.doctab span{width:282px}
.view{display:grid;grid-template-columns:1fr 20px;background:#5f5f5f}
.artboard{margin:132px 0 0 247px;border:1px solid #000;border-width:1px 0 0 1px;background:#fff;overflow:hidden}
.logo{margin-top:-1px}
.vscroll{background:#4b4b4b;display:flex;flex-direction:column;align-items:center;justify-content:space-between;padding:594px 0 8px}
.vscroll i{width:18px;height:31px;border-radius:8px;background:#696969}
.vscroll .chev{color:#aaa}
.status{display:grid;grid-template-columns:98px 22px 18px 86px 18px 22px 100px 150px 9px 12px 1fr;padding-left:4px;background:#535353;align-items:center;border-bottom:2px solid #3a3a3a;color:#c8c8c8}
.sbox{display:flex;height:19px;background:#454545;border:1px solid #5f5f5f;border-bottom:0;color:#f0f0f0;line-height:21px}
.sbox span{flex:1;padding-left:4px}
.z{width:85px}.n{width:74px}
.sbox b{background:#494949;width:22px}
.sn{color:#777;margin-top:1px}.sp{color:#c8c8c8}
.ssep{width:1px;height:19px;background:#484848}
.sel{line-height:20px;padding-top:2px}
.hscroll{display:flex;align-items:center;height:19px;background:#4a4a4a;padding:0 5px 0 7px;margin-right:20px;justify-content:space-between}
.hscroll .chev{color:#aaa}
.hscroll i{width:32px;height:17px;border-radius:8px;background:#696969;margin-left:-38px}

.dock{border-right:2px solid #3f3f3f}
.dk1{height:122px;padding-top:4px;border-bottom:2px solid #3c3c3c}
.dk2{height:86px;padding-top:4px;border-bottom:1px solid #3c3c3c}
.dbtn{width:34px;height:29px;margin:5px auto 0 8px;display:grid;place-items:center;font:22px/29px "Open Sans",sans-serif;color:#ccc}
.dbtn.on{display:flex;justify-content:center;gap:1px;background:#2f2f2f;border-radius:3px;margin-top:6px}
.dbtn.on i{width:2px;height:21px;margin-top:4px;background:#ccc}
.dbtn.on+.dbtn{margin-top:6px}
.dk2 .dbtn{margin-top:6px}

.panels{border-left:2px solid #383838}
.ptabs,.ctabs{display:flex;height:34px;background:#424242;font-size:11.500px;font-weight:700;letter-spacing:-.22px;color:#a8a8a8;line-height:34px}
.ptabs span,.ctabs span{border-right:1px solid #383838;border-bottom:1px solid #383838;overflow:hidden;padding-left:12px;flex:none}
.ptabs .on,.ctabs .on{background:#535353;color:#fff;border-bottom-color:#535353;display:flex;align-items:center}
.ptabs em{flex:1;display:flex;justify-content:flex-end;align-items:center;padding-right:8px;border-bottom:1px solid #383838}
.on .sort{margin-right:7px;margin-left:-6px}
.t1 span:nth-child(1){width:63px}.t1 span:nth-child(2){width:83px;padding-left:10px}.t1 span:nth-child(3){width:69px;padding-left:11px}.t1 span:nth-child(4){width:63px;padding-left:11px}
.t2 span:nth-child(1){width:85px}.t2 span:nth-child(2){width:54px}.t2 span:nth-child(3){width:84px}
.t3 span{width:70px}
.t4 span:nth-child(1){width:55px}.t4 span:nth-child(2){width:58px;padding-left:11px}.t4 span:nth-child(3){width:54px;padding-left:11px}.t4 span:nth-child(4){width:54px;padding-left:11px}.t4 span:nth-child(5){width:58px;padding-left:11px}
.pcolor{height:453px;border-bottom:2px solid #363636}
.colorbody{display:flex;height:133px;padding:8px 0 0 7px}
.rgb{display:grid;grid-template-columns:22px 137px 45px;grid-auto-rows:41.200px;margin-left:19px;padding-top:1.500px;color:#c0c0c0;align-items:start}
.rgb span{padding-top:7px}
.sl{width:128px;height:6px;margin-top:10px;border:1px solid #5a5a5a}
.sl.r{background:linear-gradient(90deg,#000,#f00)}.sl.g{background:linear-gradient(90deg,#000,#0f0)}.sl.b{background:linear-gradient(90deg,#000,#00f)}
.sl svg{margin:4px 0 0 -6px}
.rgb u,.hexrow u{width:45px;height:26px;border:2px solid #5f5f5f;border-radius:4px;background:#454545;color:#fff;line-height:21px;padding-left:4px}
.hexrow{display:grid;grid-template-columns:214px 12px 76px;padding:6px 0 0 7px;align-items:center;color:#c0c0c0}
.hexrow u{width:75px;padding-left:5px;font-size:12.500px}
.spectrum{width:299px;height:237px;margin:7px 0 0 7px;border:2px solid #333;border-width:2px 2px 1px 2px;background:linear-gradient(#fff,rgba(255,255,255,0) 50%,rgba(0,0,0,0) 50%,#000),linear-gradient(90deg,#f00,#ff0,#0f0,#0ff,#00f,#f0f,#f00)}
.ppath{height:175px;border-bottom:2px solid #363636}
.ppath p{padding:11px 0 0 6px;line-height:16px;color:#c8c8c8}
.ppath p.p2{padding-top:13px}
.pf{display:grid;align-items:center;height:24px;padding-left:14px;margin-top:11px}
.pf.a{grid-template-columns:46px 46px 45.700px 40.500px 90px}
.pf.c{grid-template-columns:47px 46px 46px 48px 47px 20px;padding-left:17px;margin-top:13px}
.pf svg{width:18px;height:18px;fill:#c8c8c8}
.pf .o{fill:none;stroke:#c8c8c8;stroke-width:1.400}
.expand{background:#585858;height:24px;line-height:25px;text-align:center;color:#787878;border-radius:3px;font-size:12px}
.pstroke{height:436px;border-bottom:2px solid #363636;color:#808080}
.sr{display:flex;align-items:center;height:33.500px}
.pstroke .t3+.sr{margin-top:5px}
.sr label{width:77px;text-align:right;margin-right:4px}
.sr .lit{color:#d6d6d6}
.seg{display:flex;height:27px;border:2px solid #5e5e5e;border-radius:4px}
.seg i{width:27.500px;display:grid;place-items:center}
.seg i+i{border-left:1px solid #5e5e5e}
.seg svg{width:16px;height:16px;fill:#777}
.sr .lim{width:92px}
.sr .x{width:10px;margin-left:0;margin-right:0}
.dis{background:#585858;color:#7c7c7c;border-radius:3px}
.sr .dis{width:49px;height:26px}
hr{border:0;border-top:1px solid #484848;height:1px;margin:5px 8px 0 6px}
.pstroke .t3+.sr+.sr+.sr+.sr+hr{margin-top:4px}
.dashrow{display:grid;grid-template-columns:22px 196px 97px;align-items:center;height:40px;padding-left:7px;color:#fff}
.seg.wide i{width:47px}
.seg.wide svg{width:36px}
.dashes{display:grid;grid-template-columns:52.500px 52.500px 52.500px 52.500px 53.500px 43px;padding-left:10px}
.dashes div{width:42px;text-align:center}
.dashes u{height:27px;margin-bottom:3px}
.dashes+hr{margin-top:7px}
.ah{margin-top:6px}
.ar{display:flex;align-items:center;width:71px;height:27px;background:#595959;margin-right:8px;gap:7px}
.ar i{width:48px;height:27px;background:#808080;border:1px solid #8e8e8e}
.ar.w134{width:134px}.ar.w134 i{width:110px}
.sr .end{margin-left:60px}
.sc{margin-top:4px}
.sr.sc .end{margin-left:57px}
.stp{display:flex;align-items:center;width:71px;height:26px;background:#595959;margin-right:8px;border-radius:3px;padding-left:7px}
.stp span{margin-left:6px;border-left:1px solid #535353;padding-left:4px;line-height:26px}
.al{margin-top:4px}
.al+hr{margin-top:5px}
.pr{margin-top:5px}
.sr.pr .end{margin:0 14px 0 45px}
.t4{height:35px;line-height:36px}
.players{border-bottom:2px solid #3a3a3a;height:230px}
.players::after{content:"";display:block;border-bottom:1px solid #3a3a3a;height:3px}

.taskbar{display:grid;grid-template-columns:40px 450px 60px 62px 46px 77px 1467px 338px;padding-left:20px;background:#484848;align-items:center;color:#eee}
.search{width:430px;height:49px;background:#f1f1f1;border:1px solid #ccc;display:flex;align-items:center;gap:13px;padding-left:16px;color:#333;font:18px/24px "Open Sans",sans-serif;align-self:start}
.aitask{width:61px;height:50px;background:#6a6a6a;border-bottom:3px solid #79b8ea;display:grid;place-items:center}
.aitask span{width:27px;height:27px;background:#2a1300;border:2px solid #ff8a13;color:#ff8a13;font:600 14px/22px "Open Sans",sans-serif;text-align:center;margin-top:0}
.taskbar>svg:nth-child(5),.taskbar>svg:nth-child(7){box-sizing:content-box;padding:10px 11px 9px;border-bottom:3px solid #79b8ea;margin-left:-11px}
.taskbar>svg:nth-child(7){padding:9px 10px 8px;margin-left:-10px}
.tray{display:grid;grid-template-columns:28px 33px 27px 30px 31px 54px 84px 46px 5px;align-items:center}
.two{font:14px/22px "Open Sans",sans-serif;text-align:center;display:grid}
.two:nth-child(6){width:33px}.two:nth-child(7){width:64px;margin-left:-2px}
.peek{width:1px;height:50px;background:#999}

.char{position:absolute;left:1890px;top:94px;width:290px;height:333px;background:#535353;border:1px solid #333;border-top:4px solid #333;border-right-width:2px;box-shadow:-3px 2px 4px rgba(0,0,0,.2)}
.ctabs span:nth-child(1){width:88px}.ctabs span:nth-child(2){width:60px;padding-left:10px}.ctabs span:nth-child(3){width:60px;padding-left:10px}
.ctabs em{flex:1;display:flex;align-items:center;padding-left:29px;border-bottom:1px solid #383838}
.ctabs em i{width:1px;height:13px;background:#aaa;margin:0 9px 0 9px}
.cbody{padding:8px 7px 0}
.cbody hr{margin:7px 0 7px}
.combo.full{height:25.500px}
.combo.full span{font-size:12px}
.f2{margin-top:7px}
.fi{align-self:center;color:#aaa;margin-left:2px}
.combo.full .fi+span{padding-left:9px}
.combo.f2 span{padding-left:6px}
.cg{display:grid;grid-template-columns:26px 120px 26px 102px;row-gap:7px;align-items:center}
.cg>svg{width:22px;height:24px;fill:#c4c4c4;overflow:visible}
.cg path{fill:none;stroke:#c4c4c4;stroke-width:1.300}
.cg path[fill]{fill:#c4c4c4}
.cg text{font-family:"Liberation Serif",serif}
.cg .s,.cg .k{font-family:"Liberation Sans",sans-serif;letter-spacing:-1.500px}
.cg .k{fill:#444}
.cg .combo{width:102px}
.cg .combo:nth-child(4n+2){width:101px}
.cg .combo span{font-size:12.300px}
.tt{display:grid;grid-template-columns:39px 67px 37px 69px 36px 20px;padding:0 0 0 4px;height:18px;align-items:center;font:20px/20px "Liberation Serif",serif;color:#c8c8c8}
.tt span{width:max-content;letter-spacing:-1px}
.tt small{font-size:15px}
.tt sup,.tt sub{font-size:10px;line-height:0}
.tt .un{text-decoration:underline}.tt .sk{text-decoration:line-through}
.lang{display:grid;grid-template-columns:143px 26px 105px;align-items:center}
.combo.one{width:105px;align-items:center;padding-right:5px}
.combo.one span{padding-left:6px}
.aa{font-size:15px;color:#bbb;display:flex}
.aa i{position:relative;top:4px}

.dialog{position:absolute;left:870px;top:216px;width:843px;height:849px;background:#535353;border:1px solid #555;font-size:14px;line-height:20px;color:#fff;box-shadow:0 2px 10px rgba(0,0,0,.4)}
.dialog::before{content:"";position:absolute;left:842px;top:5px;width:10px;height:852px;border-right:2px solid #6a6a6a;background:linear-gradient(90deg,rgba(0,0,0,.1),rgba(0,0,0,.04))}
.dialog::after{content:"";position:absolute;left:-2px;top:848px;width:854px;height:10px;border-bottom:2px solid #777;background:linear-gradient(rgba(0,0,0,.1),rgba(0,0,0,.04));box-shadow:0 1px 3px rgba(0,0,0,.2)}
.dialog header{height:37px;background:#fff;color:#111;line-height:38px;padding-left:8px}
.dtop{display:grid;grid-template-columns:391px 379px 20px;grid-auto-rows:38.700px;align-items:center;padding-top:21.500px}
.save{margin-top:4px}
.dialog label,.mut{color:#c6c6c6}
.dtop label,.dr label{text-align:right;padding-right:6px}
.dialog .off{color:#787878}
.dsel{display:flex;align-items:center;justify-content:space-between;width:365px;height:26px;background:#4a4a4a;border:1px solid #616161;border-radius:3px;padding:0 6px 0 7px}
.dsel.dis{background:#585858;border:0;justify-content:flex-end}
.dis .chev{color:#777}
.dmid{display:grid;grid-template-columns:267px 538px;padding-left:19px}
.dleft{padding-top:21.500px}
.list{display:grid;grid-template-columns:1fr 15px;width:250px;height:149px;margin-left:2px;border:2px solid #5d5d5d;overflow:hidden}
.list ul{list-style:none;height:145px;overflow:hidden}
.list li{height:27.500px;line-height:28px;padding-left:5px}
.list li.on{background:linear-gradient(#50657c 26px,transparent 26px)}
.lsb{background:#4a4a4a;display:flex;flex-direction:column;align-items:center;padding:3px 0}
.lsb .chev{color:#aaa}
.lsb i{width:12px;height:90px;border-radius:6px;background:#646464;margin:5px 0 31px}
.prevbox{width:254px;height:394px;margin-top:9px;border:1px solid #4b4b4b;border-radius:3px}
.mat{width:252px;height:313px;background:#888;border:1px solid #999;padding:9px}
.page{height:295px;margin:0 0 0 1px;width:230px;background:#fff;border:1px solid #000;border-bottom:0}
.nav{display:grid;grid-template-columns:26px 17px 155px 23px 12px;padding:6px 0 0 11px;align-items:center;color:#777}
.nav u{width:145px;height:27px;line-height:28px;padding-left:8px}
.info{display:grid;grid-template-columns:93px 1fr;column-gap:4px;row-gap:3px;font-size:12.300px;line-height:16px;color:#cfcfcf;margin-top:8px}
.info span:nth-child(odd){text-align:right}
.dright{padding-top:20px}
.dright h2{font:inherit;color:#c6c6c6;height:26px;line-height:25px;border-bottom:1px solid #484848}
.dr{display:grid;align-items:center}
.r1{grid-template-columns:104px 78px 20px 59px 22px 1fr;height:40px;margin-top:5px}
.copies{width:64px;height:26px;border:2px solid #3b94ec;border-radius:3px;background:#fff;padding:2px 3px}
mark{background:#0a78d7;color:#fff;display:block;width:9px;height:18px;line-height:18px;border-right:1px solid #e80}
.ck{width:16px;height:16px;border:1px solid #ccc;border-radius:3px;background:#4e4e4e}
.ck.off{border-color:#6e6e6e;background:none}
.rad{width:16px;height:16px;border:1.500px solid #6e6e6e;border-radius:50%}
.rad.on{border:6px solid #7a7a7a;margin-top:-3px}
.up1{position:relative;top:-1.500px}
.r2{grid-template-columns:105px 20px 43px 21px 51px 181px;height:38px}
.r2 .dis{height:26px}
.r3{grid-template-columns:21px 136px 21px 1fr;height:32px;padding-left:104px}
.grp{border:1px solid #494949;border-radius:4px}
.g1{height:144px;margin-top:21px;display:grid;grid-template-rows:26px 26px 26px 26px;row-gap:13px;margin-right:1px}
.g1>.m1{margin-top:-14px}
.m1{grid-template-columns:103px 268px;height:26px}
.m1 .dsel,.m1 label{position:relative}
.m1 .bg{background:#535353;margin-left:18px}
.m1 .dsel{width:269px;outline:4px solid #535353}
.g1>.m2{grid-template-columns:103px 99px 65px 99px;margin-top:-14px;height:26px}
.m2 .dis{height:26px;line-height:26px;padding-left:6px}
.g1>.m3{grid-template-columns:104px 20px 116px 125px;margin-top:-16px;height:31px}
.m3 .ckon{margin-top:-4px}
.m3 .up1{top:-2px}
.ori{display:grid;grid-template-columns:repeat(4,31px);height:31px;border:2px solid #5e5e5e;border-radius:4px;width:126px}
.ori i{display:grid;place-items:center}
.ori i+i{border-left:1px solid #5e5e5e}
.ori svg{width:18px;height:20px;fill:#7a7a7a}
.ori path{fill:none;stroke:#7a7a7a;stroke-width:1.400}
.ori .f{fill:#7a7a7a;stroke:none}
.ori .on svg{fill:#aaa}.ori .on path{stroke:#aaa}.ori .on .f{fill:#aaa;stroke:none}
.g1>.m4{height:26px;padding-left:104px;margin-top:-14px}
.g2{height:222px;margin:26px 1px 0 0}
.g2 h3{font:inherit;color:#c6c6c6;height:20px;margin:-10px 0 0 7px;width:62px;background:#535353;padding-left:4px}
.g2 .dr{height:39px}
.g2 .dr>label{padding-right:6px}
.g2 .o1{margin-top:6px;grid-template-columns:100px 246px}
.o1 .dsel,.o3 .dsel{width:246px}
.o2{grid-template-columns:99px 37px 19px 95px 16px 81px}
.o2 u{height:26px;border:2px solid #5f5f5f;border-right-width:4px;border-radius:3px;background:#3f3f3f;line-height:21px;padding-left:3px;overflow:hidden;white-space:nowrap;width:80px;letter-spacing:.1px}
.o3{grid-template-columns:100px 259px 60px 104px}
.ovl{display:flex;align-items:center;height:26px;background:#585858;border-radius:3px;color:#7c7c7c;padding-left:7px}
.ovl span{margin-left:6px;border-left:1px solid #535353;padding-left:4px;line-height:26px}
.o4{grid-template-columns:170px 22px 112px 85px 20px 99px;padding-left:11px}
.o4 u{height:26px;line-height:26px;padding-left:6px;width:99px}
.lk{width:31px;height:31px;background:#585858;border-radius:3px;display:grid;place-items:center;color:#909090;margin-top:4px}
.o5{grid-template-columns:21px 81px 128px;padding-left:100px}
.g2 .o5{height:35px}
.o5 u{height:26px}
.dfoot{display:flex;padding:28px 0 0 18px}
.dfoot button{width:116px;height:33px;border:2px solid #fff;border-radius:17px;line-height:31px;letter-spacing:-.2px}
.dfoot .fill{background:#fff;color:#444;margin-right:318px}
.dfoot .def{border-width:3px;margin:0 5px 0 18px;line-height:29px}
```
